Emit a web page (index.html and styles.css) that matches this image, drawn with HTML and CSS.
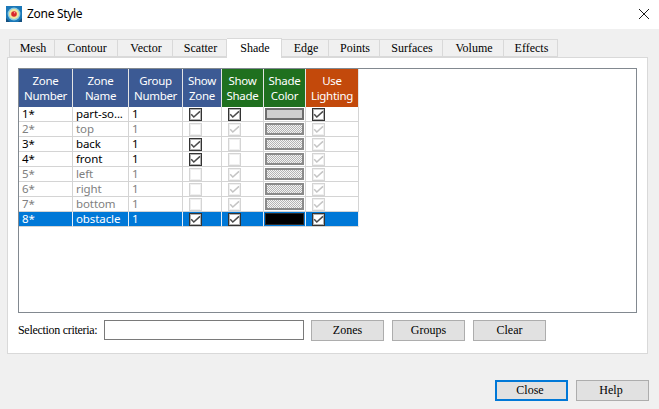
FILE: index.html
```html
<!DOCTYPE html>
<html lang="en">
<head>
<meta charset="utf-8">
<title>Zone Style</title>
<link rel="stylesheet" href="styles.css">
</head>
<body>
<div class="dialog">
  <header class="titlebar">
    <svg class="app-icon" width="16" height="16" viewBox="0 0 16 16">
      <rect width="16" height="16" fill="#1b78b8"/>
      <path d="M0 12L4 16H0ZM16 12L12 16H16Z" fill="#14507f"/>
      <circle cx="8" cy="8" r="6.4" fill="#8ccbe0"/>
      <circle cx="8" cy="8" r="5" fill="#f3e59a"/>
      <circle cx="8" cy="8" r="2.8" fill="#d9272b"/>
      <circle cx="8.6" cy="6.8" r="0.8" fill="#f6a8a8"/>
    </svg>
    <span class="title">Zone Style</span>
    <svg class="close-x" width="10" height="10" viewBox="0 0 10 10"><path d="M0 0L10 10M10 0L0 10" stroke="#1a1a1a" stroke-width="1" fill="none"/></svg>
  </header>
  <main class="content">
    <nav class="tabs">
      <span class="tab w46">Mesh</span><span class="tab w63">Contour</span><span class="tab w55">Vector</span><span class="tab w54">Scatter</span><span class="tab active w55">Shade</span><span class="tab w47">Edge</span><span class="tab w51">Points</span><span class="tab w63">Surfaces</span><span class="tab w61">Volume</span><span class="tab w54">Effects</span>
    </nav>
    <section class="panel">
      <div class="frame">
        <div class="grid">
          <div class="row head">
            <div class="hc blue">Zone<br>Number</div><div class="hc blue">Zone<br>Name</div><div class="hc blue">Group<br>Number</div><div class="hc blue">Show<br>Zone</div><div class="hc green">Show<br>Shade</div><div class="hc green">Shade<br>Color</div><div class="hc orange">Use<br>Lighting</div>
          </div>
          <div class="row">
            <div class="c">1*</div><div class="c">part-so...</div><div class="c">1</div>
            <div class="c"><span class="cb on"><svg class="tick" viewBox="0 0 11 11"><path d="M1.2 5.2L3.8 8L10 2.4"/></svg></span></div>
            <div class="c"><span class="cb on"><svg class="tick" viewBox="0 0 11 11"><path d="M1.2 5.2L3.8 8L10 2.4"/></svg></span></div>
            <div class="c swc"><span class="sw solid"></span></div>
            <div class="c"><span class="cb on"><svg class="tick" viewBox="0 0 11 11"><path d="M1.2 5.2L3.8 8L10 2.4"/></svg></span></div>
          </div>
          <div class="row dim">
            <div class="c">2*</div><div class="c">top</div><div class="c">1</div>
            <div class="c"><span class="cb"></span></div>
            <div class="c"><span class="cb"><svg class="tick" viewBox="0 0 11 11"><path d="M1.2 5.2L3.8 8L10 2.4"/></svg></span></div>
            <div class="c swc"><span class="sw hatch"></span></div>
            <div class="c"><span class="cb"><svg class="tick" viewBox="0 0 11 11"><path d="M1.2 5.2L3.8 8L10 2.4"/></svg></span></div>
          </div>
          <div class="row">
            <div class="c">3*</div><div class="c">back</div><div class="c">1</div>
            <div class="c"><span class="cb on"><svg class="tick" viewBox="0 0 11 11"><path d="M1.2 5.2L3.8 8L10 2.4"/></svg></span></div>
            <div class="c"><span class="cb"></span></div>
            <div class="c swc"><span class="sw hatch"></span></div>
            <div class="c"><span class="cb"><svg class="tick" viewBox="0 0 11 11"><path d="M1.2 5.2L3.8 8L10 2.4"/></svg></span></div>
          </div>
          <div class="row">
            <div class="c">4*</div><div class="c">front</div><div class="c">1</div>
            <div class="c"><span class="cb on"><svg class="tick" viewBox="0 0 11 11"><path d="M1.2 5.2L3.8 8L10 2.4"/></svg></span></div>
            <div class="c"><span class="cb"></span></div>
            <div class="c swc"><span class="sw hatch"></span></div>
            <div class="c"><span class="cb"><svg class="tick" viewBox="0 0 11 11"><path d="M1.2 5.2L3.8 8L10 2.4"/></svg></span></div>
          </div>
          <div class="row dim">
            <div class="c">5*</div><div class="c">left</div><div class="c">1</div>
            <div class="c"><span class="cb"></span></div>
            <div class="c"><span class="cb"><svg class="tick" viewBox="0 0 11 11"><path d="M1.2 5.2L3.8 8L10 2.4"/></svg></span></div>
            <div class="c swc"><span class="sw hatch"></span></div>
            <div class="c"><span class="cb"><svg class="tick" viewBox="0 0 11 11"><path d="M1.2 5.2L3.8 8L10 2.4"/></svg></span></div>
          </div>
          <div class="row dim">
            <div class="c">6*</div><div class="c">right</div><div class="c">1</div>
            <div class="c"><span class="cb"></span></div>
            <div class="c"><span class="cb"><svg class="tick" viewBox="0 0 11 11"><path d="M1.2 5.2L3.8 8L10 2.4"/></svg></span></div>
            <div class="c swc"><span class="sw hatch"></span></div>
            <div class="c"><span class="cb"><svg class="tick" viewBox="0 0 11 11"><path d="M1.2 5.2L3.8 8L10 2.4"/></svg></span></div>
          </div>
          <div class="row dim">
            <div class="c">7*</div><div class="c">bottom</div><div class="c">1</div>
            <div class="c"><span class="cb"></span></div>
            <div class="c"><span class="cb"><svg class="tick" viewBox="0 0 11 11"><path d="M1.2 5.2L3.8 8L10 2.4"/></svg></span></div>
            <div class="c swc"><span class="sw hatch"></span></div>
            <div class="c"><span class="cb"><svg class="tick" viewBox="0 0 11 11"><path d="M1.2 5.2L3.8 8L10 2.4"/></svg></span></div>
          </div>
          <div class="row sel">
            <div class="c">8*</div><div class="c">obstacle</div><div class="c">1</div>
            <div class="c"><span class="cb on"><svg class="tick" viewBox="0 0 11 11"><path d="M1.2 5.2L3.8 8L10 2.4"/></svg></span></div>
            <div class="c"><span class="cb on"><svg class="tick" viewBox="0 0 11 11"><path d="M1.2 5.2L3.8 8L10 2.4"/></svg></span></div>
            <div class="c swc"><span class="sw black"></span></div>
            <div class="c"><span class="cb on"><svg class="tick" viewBox="0 0 11 11"><path d="M1.2 5.2L3.8 8L10 2.4"/></svg></span></div>
          </div>
        </div>
      </div>
      <div class="criteria">
        <label class="crit-label" for="crit">Selection criteria:</label>
        <input id="crit" class="crit-input" type="text">
        <button class="btn zones">Zones</button>
        <button class="btn groups">Groups</button>
        <button class="btn clear">Clear</button>
      </div>
    </section>
    <footer class="footer">
      <button class="btn primary">Close</button>
      <button class="btn help">Help</button>
    </footer>
  </main>
</div>
</body>
</html>
```
FILE: styles.css
```css
* { box-sizing: border-box; }
html, body { margin: 0; padding: 0; }
body { width: 659px; height: 409px; overflow: hidden; background: #f0f0f0; }
.dialog { width: 659px; height: 409px; display: flex; flex-direction: column; }

.titlebar { height: 29px; background: #fff; display: flex; align-items: center; padding: 0 10px 2px 6px; }
.app-icon { flex: none; }
.title { margin-left: 5px; font: 12px "Noto Sans", sans-serif; letter-spacing: -0.3px; color: #000; }
.close-x { margin-left: auto; }

.content { flex: 1; padding: 9px 0 0 7px; display: flex; flex-direction: column; }

.tabs { display: flex; align-items: flex-end; height: 20px; padding-left: 2px; position: relative; z-index: 1; margin-bottom: -1px; }
.tab { height: 18px; padding-left: 2px; background: #f0f0f0; border: 1px solid #d9d9d9; border-left: 0; margin-bottom: 1px; display: flex; align-items: center; justify-content: center; font: 12px "Liberation Serif", serif; color: #000; }
.tab:first-child { border-left: 1px solid #d9d9d9; }
.tab.active { height: 20px; margin-bottom: 0; background: #fff; border-bottom: 0; }
.w46 { width: 46px; } .w47 { width: 47px; } .w51 { width: 51px; } .w54 { width: 54px; }
.w55 { width: 55px; } .w61 { width: 61px; } .w63 { width: 63px; }

.panel { width: 641px; height: 297px; background: #fff; border: 1px solid #d9d9d9; padding: 10px 10px 0; }
.frame { width: 619px; height: 245px; border: 1px solid #828990; }
.grid { width: 340px; }
.row { display: grid; grid-template-columns: 54px 56px 54px 39px 42px 42px 53px; height: 15px; }
.head { height: 38px; }
.hc { border-right: 1px solid #e4e4e4; color: #fff; text-align: center; font: 11.5px/15px "Noto Sans", sans-serif; letter-spacing: -0.3px; padding-top: 4px; white-space: nowrap; }
.blue { background: #3c5a94; }
.green { background: #1f701f; }
.orange { background: #c3490b; }
.c { border-right: 1px solid #d4d4d4; border-bottom: 1px solid #d4d4d4; font: 11.5px/14px "Noto Sans", sans-serif; letter-spacing: -0.1px; color: #000; padding-left: 3px; white-space: nowrap; }
.c:nth-child(n+4) { padding: 1px 0 0 6px; }
.c.swc { padding: 1px 0 0 1px; }
.dim .c { color: #808080; }
.sel .c { background: #0078d7; color: #fff; border-right-color: #e8f0f8; border-bottom-color: #d4d4d4; }

.cb { display: block; width: 13px; height: 13px; background: #fff; border: 1px solid #d4d4d4; box-shadow: inset 0 0 0 1px #f0f0f0; }
.cb.on { border-color: #333; box-shadow: inset 0 0 0 1px #b0b0b0; }
.tick { display: block; width: 11px; height: 11px; }
.tick path { fill: none; stroke: #c4c4c4; stroke-width: 1.5; }
.on .tick path { stroke: #4a4a4a; }

.sw { display: block; width: 39px; height: 12px; border: 2px solid #6e6e6e; }
.solid { background: #cfcfcf; }
.hatch { border-color: #8a8a8a; background: repeating-conic-gradient(#b4b4b4 0 25%, #f4f4f4 0 50%) 0 0 / 2px 2px; }
.black { background: #000; border: 1px solid #2a2a2a; }

.criteria { display: flex; align-items: flex-start; margin-top: 7px; }
.crit-label { width: 86px; padding-top: 3px; font: 12px/14px "Liberation Serif", serif; letter-spacing: -0.3px; color: #000; white-space: nowrap; }
.crit-input { width: 200px; height: 20px; border: 1px solid #7a7a7a; background: #fff; padding: 0; margin: 0 7px 0 0; }

.btn { width: 73px; height: 21px; padding: 0; margin: 0; background: #e1e1e1; border: 1px solid #adadad; font: 12px "Liberation Serif", serif; color: #000; }
.zones, .groups { margin-right: 8px; }
.footer { display: flex; justify-content: flex-end; gap: 8px; padding-right: 10px; margin-top: 26px; }
.primary { border: 2px solid #0078d7; padding-right: 3px; }
.help { padding-right: 3px; }
```
